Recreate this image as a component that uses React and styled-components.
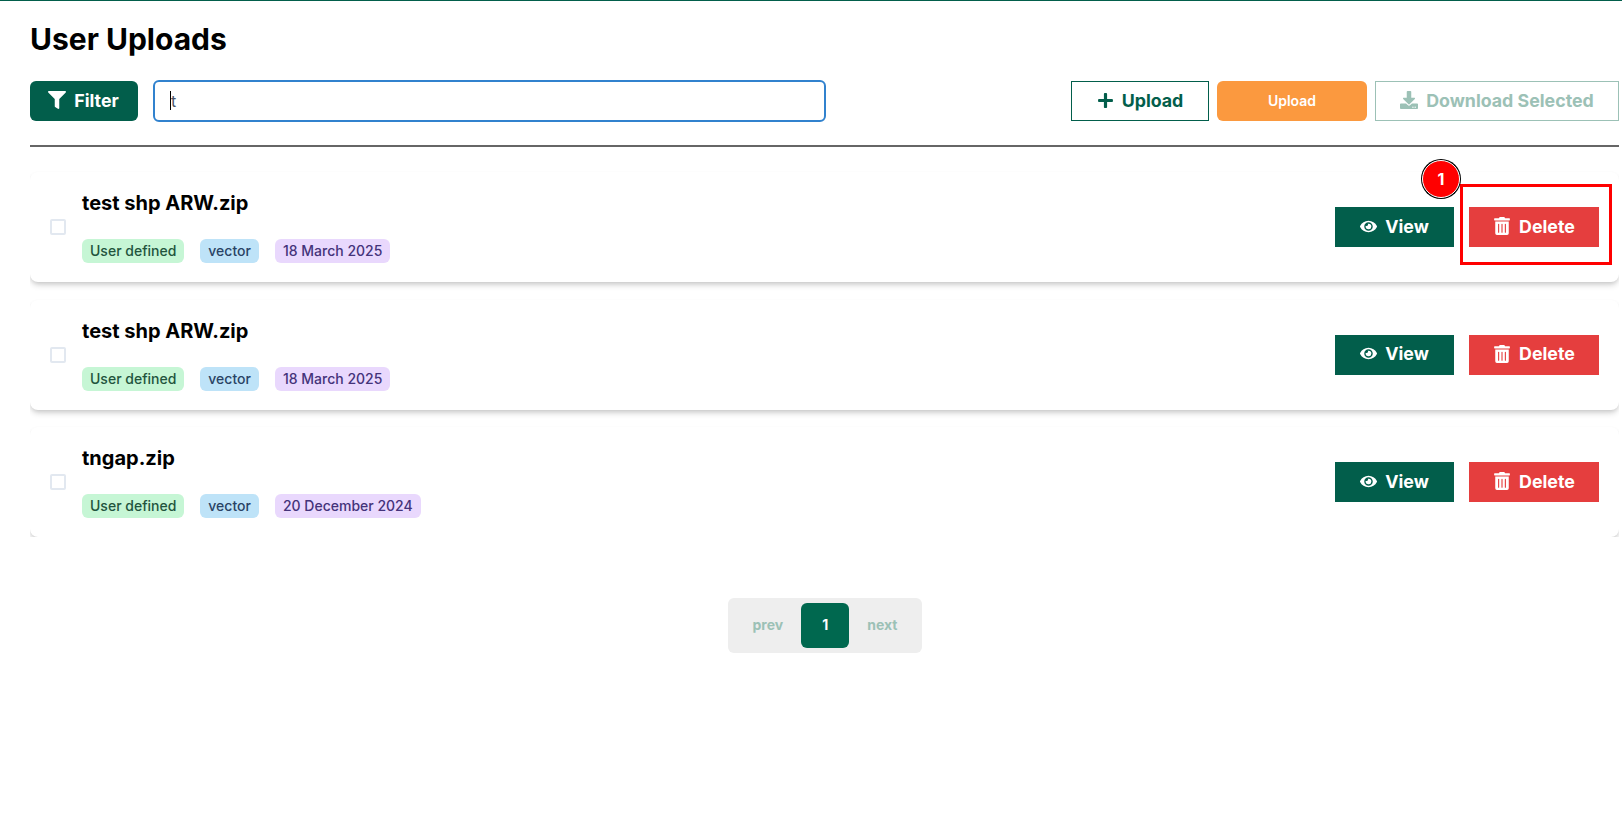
import React from 'react';
import styled, { createGlobalStyle } from 'styled-components';
import { FaFilter, FaPlus, FaDownload, FaEye, FaTrashAlt } from 'react-icons/fa';

const GlobalStyle = createGlobalStyle`
  html, body {
    margin: 0;
    padding: 0;
    background: #fff;
    font-family: Inter, "Liberation Sans", sans-serif;
  }
  * { box-sizing: border-box; }
`;

const GREEN = '#025e4b';
const PALE_GREEN = '#9cc1b6';

const Page = styled.div`
  min-height: 829px;
  border-top: 1px solid ${GREEN};
  padding: 20px 3px 0 30px;
`;

const Title = styled.h1`
  margin: 0;
  font-size: 30px;
  line-height: 36px;
  font-weight: 700;
  color: #000;
`;

const Toolbar = styled.div`
  display: flex;
  align-items: center;
  margin-top: 23px;
  height: 42px;
`;

const Button = styled.button`
  display: flex;
  align-items: center;
  justify-content: center;
  gap: 8px;
  height: 40px;
  padding: 0 0 2px;
  font-family: Inter, "Liberation Sans", sans-serif;
  font-size: 17.8px;
  font-weight: 700;
  border-radius: 0;
  border: none;
  color: #fff;
`;

const FilterButton = styled(Button)`
  width: 108px;
  padding-right: 1px;
  background: ${GREEN};
  border-radius: 6px;
`;

const SearchBox = styled.div`
  position: relative;
  width: 673px;
  height: 42px;
  margin-left: 15px;
`;

const SearchInput = styled.input`
  width: 100%;
  height: 100%;
  padding: 0 16px;
  border: 2px solid #3182ce;
  border-radius: 6px;
  outline: none;
  font-family: Inter, "Liberation Sans", sans-serif;
  font-size: 16px;
  color: #4a5568;
`;

const Caret = styled.span`
  position: absolute;
  left: 17px;
  top: 11px;
  width: 1px;
  height: 19px;
  background: #000;
`;

const Actions = styled.div`
  display: flex;
  align-items: center;
  gap: 8px;
  margin-left: auto;
`;

const AddButton = styled(Button)`
  width: 138px;
  background: #fff;
  border: 1px solid ${GREEN};
  color: ${GREEN};
`;

const OrangeButton = styled(Button)`
  width: 150px;
  background: #fb993f;
  border-radius: 6px;
  font-size: 14px;
  font-weight: 600;
`;

const DownloadButton = styled(Button)`
  width: 244px;
  background: #fff;
  border: 1px solid ${PALE_GREEN};
  color: ${PALE_GREEN};
`;

const Divider = styled.hr`
  margin: 23px 0 0;
  border: none;
  height: 2px;
  background: #666;
`;

/* the last card's shadow is cut off in the list, the badge of the first needs the top padding */
const List = styled.div`
  display: flex;
  flex-direction: column;
  gap: 17.5px;
  padding-top: 25px;
  overflow: hidden;
`;

const Card = styled.div`
  display: flex;
  align-items: center;
  gap: 16px;
  height: 110px;
  padding: 0 20px;
  border-radius: 8px;
  background: #fff;
  box-shadow: 0 4px 6px -1px rgba(0, 0, 0, 0.16), 0 2px 4px -1px rgba(0, 0, 0, 0.1);
`;

const Checkbox = styled.span`
  flex: none;
  width: 16px;
  height: 16px;
  border: 2px solid #e2e8f0;
  border-radius: 2px;
`;

const Info = styled.div`
  display: flex;
  flex-direction: column;
  gap: 21px;
  padding-bottom: 3px;
`;

const FileName = styled.div`
  font-size: 20px;
  line-height: 30px;
  font-weight: 700;
  color: #000;
`;

const Tags = styled.div`
  display: flex;
  gap: 16px;
`;

const Tag = styled.span`
  height: 24px;
  padding: 0 8px;
  border-radius: 6px;
  font-size: 14px;
  line-height: 24px;
  font-weight: 500;
  background: ${(p) => p.$bg};
  color: ${(p) => p.$fg};
`;

const RowActions = styled.div`
  position: relative;
  display: flex;
  gap: 15px;
  margin-left: auto;
`;

const ViewButton = styled(Button)`
  width: 119px;
  background: ${GREEN};
`;

const DeleteButton = styled(Button)`
  width: 130px;
  background: #e53e3e;
`;

const Highlight = styled.div`
  position: absolute;
  left: 125px;
  top: -23px;
  width: 152px;
  height: 81px;
  border: 3px solid #f00;
`;

const StepBadge = styled.div`
  position: absolute;
  left: 87px;
  top: -47px;
  width: 38px;
  height: 38px;
  display: flex;
  align-items: center;
  justify-content: center;
  border-radius: 50%;
  background: #f00;
  border: 1px solid #fff;
  box-shadow: 0 0 0 1px #000;
  color: #fff;
  font-size: 16px;
  font-weight: 700;
`;

const Pagination = styled.div`
  display: flex;
  align-items: center;
  justify-content: center;
  gap: 18px;
  width: 194px;
  height: 55px;
  margin: 61px auto 0;
  padding-left: 1px;
  border-radius: 6px;
  background: #eee;
`;

const PageLink = styled.span`
  padding-bottom: 2px;
  font-size: 14px;
  font-weight: 700;
  color: ${PALE_GREEN};
`;

const PageCurrent = styled.span`
  width: 48px;
  height: 45px;
  display: flex;
  align-items: center;
  justify-content: center;
  padding-bottom: 2px;
  border-radius: 6px;
  background: #00684f;
  color: #fff;
  font-size: 14px;
  font-weight: 700;
`;

const uploads = [
  { name: 'test shp ARW.zip', date: '18 March 2025', marked: true },
  { name: 'test shp ARW.zip', date: '18 March 2025' },
  { name: 'tngap.zip', date: '20 December 2024' },
];

const App = () => {
  return (
    <Page>
      <GlobalStyle />
      <Title>User Uploads</Title>
      <Toolbar>
        <FilterButton><FaFilter size={18} />Filter</FilterButton>
        <SearchBox>
          <SearchInput value="t" readOnly />
          <Caret />
        </SearchBox>
        <Actions>
          <AddButton><FaPlus size={17} />Upload</AddButton>
          <OrangeButton>Upload</OrangeButton>
          <DownloadButton><FaDownload size={18} />Download Selected</DownloadButton>
        </Actions>
      </Toolbar>
      <Divider />
      <List>
        {uploads.map((item, i) => (
          <Card key={i}>
            <Checkbox />
            <Info>
              <FileName>{item.name}</FileName>
              <Tags>
                <Tag $bg="#c6f6d5" $fg="#22543d">User defined</Tag>
                <Tag $bg="#bee3f8" $fg="#2a4365">vector</Tag>
                <Tag $bg="#e9d8fd" $fg="#44337a">{item.date}</Tag>
              </Tags>
            </Info>
            <RowActions>
              <ViewButton><FaEye size={17} />View</ViewButton>
              <DeleteButton><FaTrashAlt size={18} />Delete</DeleteButton>
              {item.marked && <Highlight />}
              {item.marked && <StepBadge>1</StepBadge>}
            </RowActions>
          </Card>
        ))}
      </List>
      <Pagination>
        <PageLink>prev</PageLink>
        <PageCurrent>1</PageCurrent>
        <PageLink>next</PageLink>
      </Pagination>
    </Page>
  );
};

export default App;
